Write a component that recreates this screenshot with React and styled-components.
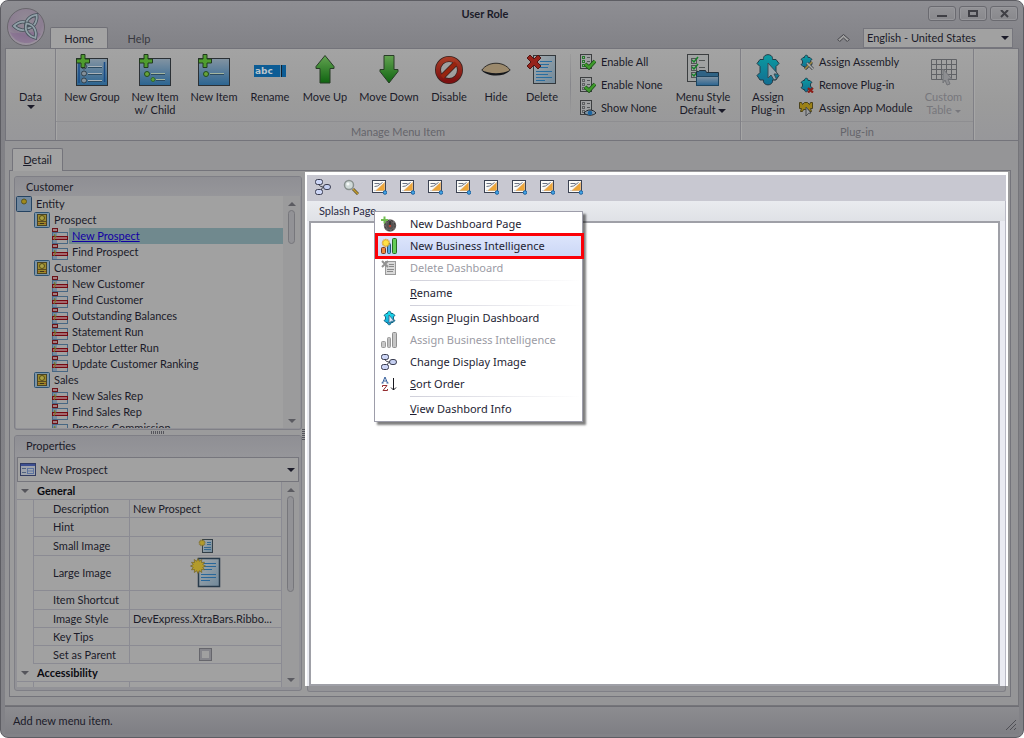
import React from 'react';
import styled, { createGlobalStyle } from 'styled-components';

const ink = '#1b1b29';
const line = '#74747b';

const GlobalStyle = createGlobalStyle`
  *, *::before, *::after { box-sizing: border-box; }
  body { margin: 0; background: #fff; color: ${ink}; font: 11px/16px Lato, "Liberation Sans", sans-serif; }
  button, select, input { font: inherit; color: inherit; }
  button { border: 0; padding: 0; background: none; text-align: left; }
  ul { list-style: none; margin: 0; padding: 0; }
  svg { display: block; flex: none; }
`;

/* ---------- window frame ---------- */
const Window = styled.div`
  display: flex;
  flex-direction: column;
  height: 100vh;
  min-height: 560px;
  padding: 0 4px 3px;
  border: 1px solid #5d5d63;
  border-radius: 8px;
  background: linear-gradient(#8e8e93, #818186 50px, #828287);
  overflow: hidden;
`;
const Header = styled.header`
  display: flex;
  height: 47px;
  flex: none;
`;
const LogoButton = styled.button`
  width: 45px;
  padding: 4px 0 0;
`;
const HeaderMain = styled.div`
  flex: 1;
  min-width: 0;
`;
const TitleRow = styled.div`
  display: flex;
  height: 26px;
`;
const Title = styled.h1`
  flex: 1;
  margin: 0;
  padding-right: 8px;
  font-size: 11px;
  line-height: 26px;
  font-weight: 700;
  text-align: center;
`;
const WindowButtons = styled.div`
  display: flex;
  gap: 3px;
  padding: 5px 1px 0 0;
`;
const WindowButton = styled.button`
  display: flex;
  align-items: center;
  justify-content: center;
  width: 28px;
  height: 15px;
  border: 1px solid #6a6a70;
  border-radius: 3px;
  background: linear-gradient(#939397, #88888c);
  box-shadow: inset 0 0 0 1px #97979b;
`;
const TabRow = styled.nav`
  display: flex;
  align-items: flex-start;
  height: 21px;
`;
const RibbonTab = styled.button`
  height: 22px;
  width: ${(p) => (p.$active ? 58 : 62)}px;
  text-align: center;
  color: ${(p) => (p.$active ? ink : '#38383f')};
  border: 1px solid ${(p) => (p.$active ? '#707077' : 'transparent')};
  border-bottom: 0;
  border-radius: 2px 2px 0 0;
  background: ${(p) => (p.$active ? '#a3a3a3' : 'none')};
`;
const CollapseButton = styled.button`
  margin: 7px 13px 0 auto;
`;
const LanguageBox = styled.label`
  position: relative;
  width: 150px;
  height: 20px;
  margin: 1px 6px 0 0;
`;
const PlainSelect = styled.select`
  appearance: none;
  width: 100%;
  height: 100%;
  padding: 0 20px 0 ${(p) => p.$indent || 3}px;
  border: 1px solid #76767d;
  border-radius: 0;
  background: #a1a1a1;
`;
const Caret = styled.span`
  display: inline-block;
  vertical-align: middle;
  border: ${(p) => p.$size || 4}px solid transparent;
  border-bottom-width: 0;
  border-top-color: ${(p) => p.$color || ink};
`;
const SelectCaret = styled(Caret)`
  position: absolute;
  right: 4px;
  top: 50%;
  margin-top: -2px;
  pointer-events: none;
`;

/* ---------- ribbon ---------- */
const Ribbon = styled.section`
  display: flex;
  flex: none;
  height: 93px;
  border: 1px solid ${line};
  background: linear-gradient(#a3a3a3, #9b9b9b 60%, #97979a);
`;
const RibbonGroup = styled.div`
  display: flex;
  flex-direction: column;
  border-right: 1px solid #808086;
  box-shadow: 1px 0 #a6a6a6;
`;
const GroupTools = styled.div`
  display: flex;
  flex: 1;
  align-items: flex-start;
  padding: 5px 9px 0;
`;
const GroupCaption = styled.div`
  height: 19px;
  line-height: 19px;
  border-top: 1px solid #8e8e91;
  color: #65656b;
  text-align: center;
`;
const BigButton = styled.button`
  display: flex;
  flex-direction: column;
  align-items: center;
  width: ${(p) => p.$width}px;
  color: ${(p) => (p.disabled ? '#77777c' : ink)};
  text-align: center;
  line-height: 13px;
  white-space: nowrap;
  svg { margin-bottom: 4px; }
`;
const DataButton = styled(BigButton)`
  margin-top: 41px;
  gap: 2px;
`;
const ToolStrip = styled.div`
  display: flex;
  gap: 13px;
  margin-right: 8px;
`;
const ToolRule = styled.div`
  width: 1px;
  height: 62px;
  margin: 0 9px 0 3px;
  background: linear-gradient(#9b9b9b, #85858a, #9b9b9b);
`;
const SmallStack = styled.div`
  display: flex;
  flex-direction: column;
  width: ${(p) => p.$width}px;
  margin-top: -4px;
`;
const PluginStack = styled(SmallStack)`
  margin-left: 12px;
`;
const SmallButton = styled.button`
  display: flex;
  align-items: center;
  gap: 5px;
  height: 23px;
  white-space: nowrap;
`;

/* ---------- body ---------- */
const Body = styled.main`
  display: flex;
  flex-direction: column;
  flex: 1;
  min-height: 0;
  padding: 7px 7px 8px 4px;
  border: solid #75757a;
  border-width: 0 1px 1px 0;
  background: #959597;
`;
const DetailTab = styled.button`
  flex: none;
  align-self: flex-start;
  width: 51px;
  height: 23px;
  margin: 0 0 -1px 3px;
  border: 1px solid ${line};
  border-bottom: 0;
  border-radius: 2px 2px 0 0;
  background: #a2a2a2;
  text-align: center;
  z-index: 1;
`;
const Page = styled.div`
  display: flex;
  flex: 1;
  min-height: 0;
  border: 1px solid ${line};
  background: #9b9b9c;
`;
const Sidebar = styled.aside`
  display: flex;
  flex-direction: column;
  flex: none;
  width: 292px;
  padding: 5px 0 5px 4px;
`;
const Panel = styled.section`
  display: flex;
  flex-direction: column;
  min-height: 0;
  border: 1px solid #7f7f86;
  border-radius: 3px;
  background: #929297;
  overflow: hidden;
`;
const TreePanel = styled(Panel)` flex: 0 0 254px; `;
const PropertyPanel = styled(Panel)` flex: 1 1 0; `;
const PanelTitle = styled.h2`
  flex: none;
  margin: 0;
  padding: 0 11px;
  font-size: 11px;
  font-weight: 400;
  line-height: 19px;
  height: ${(p) => p.$height}px;
  background: linear-gradient(#8f8f94, #96969a);
`;
const Grip = styled.div`
  flex: none;
  align-self: center;
  width: ${(p) => (p.$vertical ? 3 : 14)}px;
  height: ${(p) => (p.$vertical ? 14 : 5)}px;
  padding: 1px 0;
  background: ${(p) =>
    p.$vertical
      ? 'repeating-linear-gradient(#55555c 0 1px, transparent 1px 2px)'
      : 'repeating-linear-gradient(90deg, #55555c 0 1px, transparent 1px 2px)'};
  background-clip: content-box;
`;
const ScrollArea = styled.div`
  display: flex;
  flex: 1;
  min-height: 0;
  margin: 0 1px 1px;
  overflow: hidden;
  background: #a1a1a1;
`;
const PropertyArea = styled(ScrollArea)`
  margin: 0 2px 3px;
`;
const Track = styled.div`
  display: flex;
  flex-direction: column;
  align-items: center;
  flex: none;
  width: 17px;
  padding: 6px 0 5px;
  background: #9b9b9c;
`;
const Thumb = styled.div`
  width: 7px;
  height: ${(p) => p.$height}px;
  margin: 4px 0 auto;
  border: 1px solid #77777c;
  border-radius: 4px;
  background: #929296;
`;
const UpCaret = styled(Caret)` transform: rotate(180deg); `;

const Tree = styled.ul`
  flex: 1;
  min-width: 0;
`;
const TreeRow = styled.li`
  display: flex;
  height: 16px;
  padding-left: ${(p) => p.$level * 18}px;
`;
const TreeLink = styled.button`
  flex: 1;
  margin-left: 1px;
  padding-left: 3px;
  line-height: 16px;
  white-space: nowrap;
  background: ${(p) => (p.$selected ? '#70898e' : 'none')};
  color: ${(p) => (p.$selected ? '#1200a4' : ink)};
  text-decoration: ${(p) => (p.$selected ? 'underline' : 'none')};
`;

const ObjectBox = styled.label`
  position: relative;
  flex: none;
  height: 25px;
  margin: 0 2px;
  > svg { position: absolute; left: 3px; top: 5px; }
`;
const PropertyGrid = styled.div`
  flex: 1;
  min-width: 0;
`;
const PropertyTable = styled.table`
  width: 100%;
  border-collapse: separate;
  border-spacing: 0;
  table-layout: fixed;
`;
const Category = styled.th`
  height: 18px;
  padding: 0;
  border-right: 1px solid #8b8b93;
  border-bottom: 1px solid #8b8b93;
  text-align: left;
  color: #0a0a10;
  line-height: 16px;
  button { display: flex; align-items: center; gap: 8px; padding-left: 4px; font-weight: 700; }
`;
const Gutter = styled.td`
  padding: 0;
  border-right: 1px solid #8b8b93;
`;
const PropName = styled.th`
  height: ${(p) => p.$height}px;
  padding: 0 0 0 19px;
  border-right: 1px solid #8b8b93;
  border-bottom: 1px solid #8b8b93;
  font-weight: 400;
  line-height: 16px;
  text-align: left;
  white-space: nowrap;
`;
const PropValue = styled.td`
  padding: 0 3px;
  border-right: 1px solid #8b8b93;
  border-bottom: 1px solid #8b8b93;
  line-height: 16px;
  white-space: nowrap;
  svg { margin: 0 auto; }
`;
const CheckBox = styled.input`
  appearance: none;
  display: block;
  width: 13px;
  height: 13px;
  margin: 0 auto;
  border: 1px solid #66666c;
  box-shadow: inset 0 0 0 2px #85858b;
  background: #a0a0a0;
`;

/* ---------- dashboard ---------- */
const Dashboard = styled.section`
  display: flex;
  flex-direction: column;
  flex: 1;
  min-width: 0;
  margin: 1px 2px 4px 0;
`;
const Lit = styled.div`
  display: flex;
  flex-direction: column;
  flex: 1;
  padding: 3px 2px 0;
  background: #fff;
`;
const DimEdge = styled.div`
  height: 6px;
  margin: 0 2px;
  border: solid #808087;
  border-width: 0 1px 1px;
  border-radius: 0 0 3px 3px;
  background: #949498;
`;
const Toolbar = styled.div`
  display: flex;
  align-items: center;
  gap: 12px;
  height: 26px;
  padding: 0 8px 2px;
  background: #c8c8d1;
`;
const PageTabs = styled.div`
  position: relative;
  height: 20px;
  padding-left: 12px;
  background: linear-gradient(#e9ebef, #dfe1e6);
  border-right: 1px solid #b9b9c4;
  z-index: 2;
`;
const PageTab = styled.button`
  height: 20px;
  line-height: 20px;
  color: #2c2c45;
`;
const CanvasFrame = styled.div`
  display: flex;
  flex: 1;
  padding: 0 5px 0 2px;
  background: #eaebf2;
  border-right: 1px solid #b9b9c4;
`;
const Canvas = styled.div`
  flex: 1;
  border: 2px solid #9fa0a7;
  background: #fff;
`;

/* ---------- context menu ---------- */
const Menu = styled.ul`
  position: absolute;
  left: 67px;
  top: 10px;
  width: 209px;
  padding: 1px 0;
  border: 1px solid #9d9daa;
  background: #fff;
  box-shadow: 3px 3px 2px rgba(0, 0, 0, 0.5);
  font: 11px/22px "Noto Sans", sans-serif;
`;
const MenuRow = styled.li`
  position: relative;
`;
const MenuButton = styled.button`
  display: flex;
  align-items: center;
  gap: 13px;
  width: 100%;
  height: 22px;
  padding-left: 6px;
  color: ${(p) => (p.disabled ? '#9b9ba4' : '#1e1e33')};
  background: ${(p) => (p.$hot ? 'linear-gradient(#dde5fc, #cbd7f6)' : 'none')};
`;
const IconSlot = styled.span`
  width: 16px;
  height: 16px;
`;
const MenuRule = styled.li`
  height: 3px;
  margin-left: 35px;
  padding: 1px 0;
  background: linear-gradient(90deg, #d0d0da, #fff) content-box;
`;
const RedFrame = styled.span`
  position: absolute;
  inset: -2px -2px -2px 0;
  border: 3px solid #fb0007;
  pointer-events: none;
`;

const StatusBar = styled.footer`
  display: flex;
  flex: none;
  align-items: center;
  justify-content: space-between;
  height: 28px;
  padding: 0 2px 0 8px;
  border-top: 1px solid #6e6e74;
  background: linear-gradient(#8c8c90, #7f7f84);
  svg { align-self: flex-end; margin-bottom: 3px; }
`;

/* ---------- icons ---------- */
const Svg = ({ s = 16, children }) => (
  <svg width={s} height={s} viewBox={`0 0 ${s} ${s}`} fill="none" aria-hidden="true">{children}</svg>
);
const DefsSvg = styled.svg`
  position: absolute;
`;
const Defs = () => (
  <DefsSvg width="0" height="0" aria-hidden="true">
    <defs>
      <linearGradient id="blue" x2="0" y2="1"><stop stopColor="#8394a2" /><stop offset="1" stopColor="#2b6491" /></linearGradient>
      <linearGradient id="green" x2="0" y2="1"><stop stopColor="#63a351" /><stop offset="1" stopColor="#0f6410" /></linearGradient>
      <linearGradient id="red" x2="0" y2="1"><stop stopColor="#a63a25" /><stop offset="1" stopColor="#7c1010" /></linearGradient>
      <linearGradient id="teal" x2="0" y2="1"><stop stopColor="#0b9ba1" /><stop offset="1" stopColor="#126d91" /></linearGradient>
      <linearGradient id="cyan" x2="0" y2="1"><stop stopColor="#1ce4ec" /><stop offset="1" stopColor="#109ed8" /></linearGradient>
      <linearGradient id="paper" x2="1" y2="1"><stop stopColor="#a4aaad" /><stop offset="1" stopColor="#71899a" /></linearGradient>
      <radialGradient id="orb" cx=".5" cy=".3" r=".75"><stop stopColor="#918a95" /><stop offset=".6" stopColor="#8b7d91" /><stop offset="1" stopColor="#a29ba5" /></radialGradient>
    </defs>
  </DefsSvg>
);
const Logo = () => (
  <svg width="40" height="40" viewBox="0 0 40 40" fill="none" aria-hidden="true">
    <circle cx="21" cy="20" r="18.5" fill="url(#orb)" stroke="#68666c" />
    <path d="M5 25a17 17 0 0 0 31 2C28 22 11 29 5 25Z" fill="#836690" opacity=".5" />
    {[180, -52, 58].map((a) => (
      <g key={a} transform={`translate(23 19) rotate(${a})`}>
        <path d="M-3 0C2-6 9-5 14 0 9 5 2 6-3 0Z" stroke="#46525b" strokeWidth="3.4" />
        <path d="M-3 0C2-6 9-5 14 0 9 5 2 6-3 0Z" stroke="#91a0a8" strokeWidth="1.8" />
      </g>
    ))}
  </svg>
);
const Plus = () => <path d="M5 .5h4v4.500h4.500v4H9v4.500H5V9H.5V5H5z" fill="#4f9c2e" stroke="#213b1c" />;
const NewGroupIcon = () => (
  <Svg s={32}>
    <rect x=".5" y="4.5" width="31" height="27" fill="url(#blue)" stroke="#2b3035" />
    <path d="M3 9v20M28.500 8v20" stroke="#174b88" strokeWidth="1.5" />
    {[12.5, 19.5, 26.5].map((y) => (
      <g key={y}><path d={`M12 ${y + 1}h14`} stroke="#2b4a60" /><path d={`M12 ${y}h14`} stroke="#a9b2b8" /><circle cx="8" cy={y} r="2.5" fill="#84909a" stroke="#33424d" /></g>
    ))}
    <Plus />
  </Svg>
);
const NewItemIcon = ({ child }) => (
  <Svg s={32}>
    <rect x=".5" y="4.5" width="31" height="27" fill="url(#blue)" stroke="#2b3035" />
    <path d="M12 20.500h14" stroke="#2b4a60" /><path d="M12 19.500h14" stroke="#a3b59f" />
    <circle cx="8" cy="20" r="2.5" fill="#67a338" stroke="#214b1d" />
    {child && <><path d="M17 26.500h9" stroke="#2b4a60" /><path d="M17 25.500h9" stroke="#a3b59f" /><circle cx="14" cy="25.5" r="2" fill="#5f9e38" stroke="#2f6d2b" /></>}
    <Plus />
  </Svg>
);
const RenameIcon = () => (
  <Svg s={32}>
    <rect y="11" width="32" height="12" fill="#0c5c95" />
    <text x="1" y="20" fontFamily="DejaVu Sans, sans-serif" fontWeight="700" fontSize="9" fill="#b9c4cb">abc</text>
    <path d="M27.500 11v12" stroke="#14202c" /><path d="M26.500 11v12" stroke="#5c8eae" />
  </Svg>
);
const UpIcon = () => <Svg s={32}><path d="M16 1.500 25 12.500v2h-4v14.500H11V14.500H7v-2z" fill="url(#green)" stroke="#283c27" /></Svg>;
const DownIcon = () => <Svg s={32}><path d="M11 1.500h10v14h4v2L16 29 7 17.500v-2h4z" fill="url(#green)" stroke="#283c27" /></Svg>;
const DisableIcon = () => (
  <Svg s={32}>
    <circle cx="16" cy="16" r="11" stroke="#3a2320" strokeWidth="6" />
    <path d="m9 23 14-14" stroke="#3a2320" strokeWidth="5.6" />
    <circle cx="16" cy="16" r="11" stroke="url(#red)" strokeWidth="4.4" />
    <path d="m9 23 14-14" stroke="#97240f" strokeWidth="4" />
  </Svg>
);
const HideIcon = () => (
  <Svg s={32}>
    <path d="M2 16C8 7 24 7 30 16c-8 6-20 6-28 0Z" fill="#9b896c" />
    <path d="M2 16C8 7 24 7 30 16" stroke="#2f2c28" />
    <path d="M1 15.500c8 5 22 5 30 0-6 8-24 8-30 0Z" fill="#15171b" />
  </Svg>
);
const DeleteIcon = () => (
  <Svg s={32}>
    <rect x="7.5" y="1.5" width="22" height="28" fill="url(#paper)" stroke="#33383c" />
    <path d="M14 7.500h12M14 10.500h9M14 13.500h8M10 17.500h16M10 20.500h12M10 23.500h16M10 26.500h9" stroke="#286da0" />
    <path d="m1 4 3-3 4 4 4-4 3 3-4 4 4 4-3 3-4-4-4 4-3-3 4-4z" fill="#96231b" stroke="#511512" />
  </Svg>
);
const ListIcon = ({ mark }) => (
  <Svg>
    <rect x=".5" y=".5" width="11" height="14" fill="#9fa1a2" stroke="#3c3e40" />
    {[3, 7, 11].map((y) => (
      <g key={y}><rect x="2.5" y={y - 0.5} width="2" height="2" stroke={mark === 'all' ? '#267b2b' : '#606264'} /><path d={`M7 ${y + 0.5}h3`} stroke="#55585a" /></g>
    ))}
    {mark === 'eye' ? (
      <><path d="M4 13c3-4 9-4 12 0-3 3-9 3-12 0Z" fill="#8094a3" stroke="#20242a" /><circle cx="10" cy="13" r="2.3" fill="#1d65a0" /></>
    ) : (
      <><path d="m5 10 4 3.500 6-6.500" stroke="#1c4d1b" strokeWidth="4" /><path d="m5 10 4 3.500 6-6.500" stroke="#3f9a2b" strokeWidth="2.500" /></>
    )}
  </Svg>
);
const MenuStyleIcon = () => (
  <Svg s={32}>
    <rect x=".5" y=".5" width="21" height="27" fill="#a0a2a2" stroke="#3b3e40" />
    {[6, 13, 20].map((y) => (
      <g key={y}><rect x="4.5" y={y - 1.5} width="5" height="5" stroke="#515555" /><path d={`m5 ${y} 2 2 4-5`} stroke="#158128" strokeWidth="1.5" /><path d={`M12 ${y + 0.5}h6`} stroke="#515555" /></g>
    ))}
    <path d="M9.500 31.500v-14h2l1-1h6l1 2h12v13z" fill="#2f6385" stroke="#20303c" />
    <path d="M9.500 31.500v-9h22v9z" fill="url(#blue)" stroke="#1e4560" />
  </Svg>
);
const puzzle = 'M5 3.500h1.500c-.5-3 4-3 3.500 0h2l2 2-1.500 1v3l1.500 1-2 2h-2c.5 3-4 3-3.500 0H5l-2-2 1.500-1v-3L3 5.500z';
const Puzzle = ({ bright, mark }) => (
  <Svg>
    <path d={puzzle} fill={`url(#${bright ? 'cyan' : 'teal'})`} stroke={bright ? '#176785' : '#203f4c'} />
    {mark === 'tools' && <><path d="m7 15 7-7m1 7L9 9" stroke="#45474a" strokeWidth="3" /><path d="m7 15 7-7" stroke="#a08b40" strokeWidth="1.5" /><path d="m15 15-6-6" stroke="#a5a9ab" strokeWidth="1.5" /></>}
    {mark === 'x' && <path d="m10 11 5 4.500m0-4.500-5 4.500" stroke="#8c1d18" strokeWidth="2.2" />}
    {mark === 'arrow' && <path d="m8 5 5 6-2.500.3L8 13z" fill="#dcecff" stroke="#42617a" strokeWidth=".8" />}
  </Svg>
);
const PuzzleLargeIcon = () => (
  <Svg s={32}>
    <path d="M8 5.500h3.500C10.500-1 21.500-1 20.500 5.500H24l3 4-3 3v6l3 3-3 4.500h-3.500c1 6.500-10 6.500-9 0H8L5 21.500l3-3v-6l-3-3z" fill="url(#teal)" stroke="#243c48" />
    <path d="m16 9 10 11h-4l2.500 5-2.500 1-3-5-3 3z" fill="#98a5ac" stroke="#3b4a53" />
  </Svg>
);
const AppModuleIcon = () => (
  <Svg>
    <path d="M1.500 2.500h2l1 2 2-2h3l2 2 1-2h2v6h-2l1 3h-2l-1-2h-5l-1 2h-2l1-3h-2z" fill="#9c8117" stroke="#4b421b" />
    <path d="m8 7 5 6-2.500.3L8 16z" fill="#9da0a3" stroke="#47494d" />
  </Svg>
);
const TableIcon = () => (
  <Svg s={32}>
    <path d="M3.500 5.500h25v20h-25zM8.500 5v21M13.500 5v21M18.500 5v21M23.500 5v21M3 10.500h25M3 15.500h25M3 20.500h25" stroke="#606266" />
    <path d="m15 15 9 10h-4l2 5-3 1-2-5-2 3z" fill="#8d8e91" stroke="#737478" />
  </Svg>
);
const EntityIcon = () => (
  <Svg><rect x=".5" y=".5" width="15" height="15" rx="1" fill="#71889e" stroke="#254361" /><circle cx="8" cy="5.5" r="2.5" fill="#a08919" stroke="#5a5521" /></Svg>
);
const FolderIcon = () => (
  <Svg><rect x=".5" y=".5" width="15" height="15" rx="1" fill="#7b93a5" stroke="#2c5273" /><rect x="3.5" y="2.5" width="9" height="11" fill="#9d8b2c" stroke="#4b4422" /><path d="M4 9.500h8" stroke="#5a4a20" /><circle cx="8" cy="6" r="2.5" fill="#aaa044" stroke="#554c1c" /><path d="M4 11.500h8" stroke="#9d5b20" /><path d="M6 11.500h4" stroke="#3d3418" /></Svg>
);
const FormIcon = () => (
  <Svg><rect x=".5" y="4.5" width="15" height="11" fill="#a1a1a1" stroke="#486783" /><rect x="1" y="5" width="4" height="10" fill="#778ba1" /><rect x=".5" y=".5" width="5" height="3" fill="#a57e80" stroke="#6b1218" /><rect x="0" y="8" width="16" height="4" fill="#760811" /><rect x="1" y="9" width="14" height="2" fill="#a2696e" /><path d="m3 6-1 2h2l-2 4" stroke="#737b25" /></Svg>
);
const PropFormIcon = () => (
  <Svg><rect x=".5" y="1.5" width="15" height="12" fill="#9ea3ac" stroke="#313b62" /><path d="M1 3h14" stroke="#3d4f91" strokeWidth="2" /><path d="M2 6.500h4m-4 4h4" stroke="#51627f" /><rect x="7.5" y="6.5" width="6" height="5" fill="#a1a6ae" stroke="#5c73a0" /><path d="M8 9h5" stroke="#5c73a0" /></Svg>
);
const sunPoints = Array.from({ length: 24 }, (_, i) => {
  const r = i % 2 ? 5 : 7.5;
  const a = (i * Math.PI) / 12;
  return `${(8 + r * Math.cos(a)).toFixed(1)},${(9 + r * Math.sin(a)).toFixed(1)}`;
}).join(' ');
const NewDocIcon = () => (
  <Svg s={32}><rect x="8.5" y="1.5" width="21" height="28" fill="url(#paper)" stroke="#283b4b" strokeWidth="1.5" /><path d="M14 6.500h12M14 9.500h12M14 12.500h8M11 17.500h15M11 20.500h15M11 23.500h9" stroke="#28679a" /><polygon points={sunPoints} fill="#b39b2b" stroke="#716224" strokeWidth=".7" /></Svg>
);
const NewDocSmallIcon = () => (
  <Svg><rect x="4.5" y="1.5" width="10" height="13" fill="url(#paper)" stroke="#343f47" /><path d="M9 4.500h4M9 6.500h4M6 9.500h7M6 11.500h7" stroke="#34678d" /><polygon points={sunPoints} transform="translate(.5 .8) scale(.45)" fill="#b39b2b" stroke="#716224" /></Svg>
);
const FlowIcon = () => (
  <Svg>
    <path d="M4 4c0 3 1 4 7 4M6 12c1-3 1-4 5-4" stroke="#33353f" />
    <rect x=".5" y=".5" width="7" height="5" rx="2" fill="#cdd6f6" stroke="#3a3d50" />
    <rect x="8.500" y="5.500" width="7" height="5" rx="2.5" fill="#c5cff1" stroke="#3a3d50" />
    <rect x=".5" y="10.500" width="7" height="5" rx="2" fill="#cdd6f6" stroke="#3a3d50" />
  </Svg>
);
const SearchIcon = () => (
  <Svg><path d="m10 10 5 5" stroke="#59522f" strokeWidth="3" /><path d="m10 10 5 5" stroke="#c69c2d" strokeWidth="1.5" /><circle cx="6" cy="6" r="4.5" fill="#d0dad8" stroke="#89918f" strokeWidth="1.5" /><circle cx="5" cy="5" r="1.5" fill="#f6faf8" /></Svg>
);
const ChartIcon = () => (
  <Svg><rect x="1.5" y="1.5" width="13" height="12" fill="#fbfbf8" stroke="#3b4252" /><path d="M3 11.500h9" stroke="#c9cfd6" /><path d="M5 11.500 13.500 3.500v8z" fill="#eda63a" stroke="#e0a860" strokeWidth=".6" /><path d="M3.500 4.500h5M3.500 7.500l3-.5 5-3.500" stroke="#6c7484" /><circle cx="14" cy="13.500" r="1.8" fill="#43a6e7" stroke="#1f62a0" /></Svg>
);
const DialIcon = () => (
  <Svg><circle cx="9" cy="9.500" r="5" fill="#555252" stroke="#6c6868" strokeWidth="2.500" /><circle cx="9" cy="9.500" r="5" stroke="#3a3737" strokeDasharray="2 2" /><path d="M9 5v4.500" stroke="#191717" /><circle cx="9" cy="10" r="1.3" fill="#b74334" /><path d="M3.500.5v7M0 4h7" stroke="#71bd51" strokeWidth="2" /></Svg>
);
const BarsIcon = ({ gray }) => (
  <Svg>
    <rect x=".5" y="9.5" width="4" height="6" rx="1" fill={gray ? '#c9c9c9' : '#ee873f'} stroke={gray ? '#999' : '#753b21'} />
    <rect x="6.5" y="5.5" width="3" height="10" rx="1" fill={gray ? '#c0c0c0' : '#55a7e4'} stroke={gray ? '#999' : '#235775'} />
    <rect x="11.5" y=".5" width="4" height="15" rx="1" fill={gray ? '#c6c6c6' : '#63cc58'} stroke={gray ? '#8f8f8f' : '#286b25'} />
    {!gray && <polygon points={sunPoints} transform="translate(.5 0) scale(.55)" fill="#ffe145" stroke="#d59312" />}
  </Svg>
);
const DeletePageIcon = () => (
  <Svg><rect x="4.5" y="1.5" width="10" height="13" fill="#d9d9d9" stroke="#999" /><path d="M8 4.500h5M8 6.500h5M6 9.500h7M6 11.500h6" stroke="#8a8a8a" /><path d="m1 1 6 6m0-6L1 7" stroke="#929292" strokeWidth="2" /></Svg>
);
const SortIcon = () => (
  <Svg><path d="m1.500 7 2.500-6 2.500 6M2.500 5h3M.5 7h2M5.500 7h2" stroke="#355f9c" /><path d="M1.500 11V9.500H6l-4 5h4.500V13" stroke="#942d30" /><path d="M12.500 2v12m-2.500-2.500 2.500 2.500 2.500-2.500" stroke="#17171e" /></Svg>
);
const CollapseIcon = () => (
  <svg width="13" height="8" viewBox="0 0 13 8" fill="none" aria-hidden="true"><path d="m.7 5.500 5.800-5 5.800 5-2 2-3.800-3.500-3.800 3.500z" fill="#a0a0a0" stroke="#45454b" /></svg>
);

/* ---------- data ---------- */
const bigTools = [
  ['New Group', NewGroupIcon, 54],
  ['New Item\nw/ Child', () => <NewItemIcon child />, 46],
  ['New Item', NewItemIcon, 46],
  ['Rename', RenameIcon, 40],
  ['Move Up', UpIcon, 44],
  ['Move Down', DownIcon, 58],
  ['Disable', DisableIcon, 36],
  ['Hide', HideIcon, 32],
  ['Delete', DeleteIcon, 34],
];
const lines = (text) => text.split('\n').map((t) => <span key={t}>{t}</span>);

const tree = [
  [0, 'Entity'], [1, 'Prospect'], [2, 'New Prospect'], [2, 'Find Prospect'],
  [1, 'Customer'], [2, 'New Customer'], [2, 'Find Customer'], [2, 'Outstanding Balances'],
  [2, 'Statement Run'], [2, 'Debtor Letter Run'], [2, 'Update Customer Ranking'],
  [1, 'Sales'], [2, 'New Sales Rep'], [2, 'Find Sales Rep'], [2, 'Process Commission'],
];
const treeIcons = [EntityIcon, FolderIcon, FormIcon];
const properties = [
  ['Description', 18, 'New Prospect'],
  ['Hint', 19, ''],
  ['Small Image', 19, <NewDocSmallIcon />],
  ['Large Image', 35, <NewDocIcon />],
  ['Item Shortcut', 19, ''],
  ['Image Style', 18, 'DevExpress.XtraBars.Ribbo...'],
  ['Key Tips', 18, ''],
  ['Set as Parent', 18, <CheckBox type="checkbox" aria-label="Set as Parent" />],
];
const menu = [
  { text: 'New Dashboard Page', icon: <DialIcon /> },
  { text: 'New Business Intelligence', icon: <BarsIcon />, hot: true },
  { text: 'Delete Dashboard', icon: <DeletePageIcon />, off: true },
  null,
  { text: 'Rename', key: 'R' },
  null,
  { text: 'Assign Plugin Dashboard', key: 'P', icon: <Puzzle bright mark="arrow" /> },
  { text: 'Assign Business Intelligence', icon: <BarsIcon gray />, off: true },
  { text: 'Change Display Image', icon: <FlowIcon /> },
  { text: 'Sort Order', key: 'S', icon: <SortIcon /> },
  null,
  { text: 'View Dashbord Info', key: 'V' },
];
const Mnemonic = ({ text, k }) => {
  const i = k ? text.indexOf(k) : -1;
  return i < 0 ? <span>{text}</span> : <span>{text.slice(0, i)}<u>{k}</u>{text.slice(i + 1)}</span>;
};

const ScrollTrack = ({ thumb }) => (
  <Track><UpCaret $color="#5b5b61" /><Thumb $height={thumb} /><Caret $color="#5b5b61" /></Track>
);

export default function App() {
  return (
    <>
      <GlobalStyle />
      <Window>
        <Defs />
        <Header>
          <LogoButton aria-label="Application menu"><Logo /></LogoButton>
          <HeaderMain>
            <TitleRow>
              <Title>User Role</Title>
              <WindowButtons>
                <WindowButton aria-label="Minimize"><svg width="10" height="9"><rect y="6" width="10" height="2" fill="#3f3f45" /></svg></WindowButton>
                <WindowButton aria-label="Maximize"><svg width="10" height="8"><rect x="1" y="1" width="8" height="5" fill="none" stroke="#3f3f45" strokeWidth="2" /></svg></WindowButton>
                <WindowButton aria-label="Close"><svg width="9" height="8"><path d="m1 0 7 7m0-7L1 7" stroke="#3f3f45" strokeWidth="2" /></svg></WindowButton>
              </WindowButtons>
            </TitleRow>
            <TabRow>
              <RibbonTab $active>Home</RibbonTab>
              <RibbonTab>Help</RibbonTab>
              <CollapseButton aria-label="Collapse ribbon"><CollapseIcon /></CollapseButton>
              <LanguageBox>
                <PlainSelect aria-label="Language"><option>English - United States</option></PlainSelect>
                <SelectCaret />
              </LanguageBox>
            </TabRow>
          </HeaderMain>
        </Header>

        <Ribbon>
          <RibbonGroup>
            <DataButton $width={49}>Data<Caret /></DataButton>
          </RibbonGroup>
          <RibbonGroup>
            <GroupTools>
              <ToolStrip>
                {bigTools.map(([text, Icon, width]) => (
                  <BigButton key={text} $width={width}><Icon />{lines(text)}</BigButton>
                ))}
              </ToolStrip>
              <ToolRule />
              <SmallStack $width={95}>
                <SmallButton><ListIcon mark="all" />Enable All</SmallButton>
                <SmallButton><ListIcon mark="none" />Enable None</SmallButton>
                <SmallButton><ListIcon mark="eye" />Show None</SmallButton>
              </SmallStack>
              <BigButton $width={56}><MenuStyleIcon /><span>Menu Style</span><span>Default <Caret /></span></BigButton>
            </GroupTools>
            <GroupCaption>Manage Menu Item</GroupCaption>
          </RibbonGroup>
          <RibbonGroup>
            <GroupTools>
              <BigButton $width={36}><PuzzleLargeIcon />{lines('Assign\nPlug-in')}</BigButton>
              <PluginStack $width={125}>
                <SmallButton><Puzzle mark="tools" />Assign Assembly</SmallButton>
                <SmallButton><Puzzle mark="x" />Remove Plug-in</SmallButton>
                <SmallButton><AppModuleIcon />Assign App Module</SmallButton>
              </PluginStack>
              <BigButton $width={41} disabled><TableIcon /><span>Custom</span><span>Table <Caret $color="#77777c" $size={3} /></span></BigButton>
            </GroupTools>
            <GroupCaption>Plug-in</GroupCaption>
          </RibbonGroup>
        </Ribbon>

        <Body>
          <DetailTab><u>D</u>etail</DetailTab>
          <Page>
            <Sidebar>
              <TreePanel>
                <PanelTitle $height={19}>Customer</PanelTitle>
                <ScrollArea>
                  <Tree>
                    {tree.map(([level, text]) => {
                      const Icon = treeIcons[level];
                      return (
                        <TreeRow key={level + text} $level={level}>
                          <Icon />
                          <TreeLink $selected={text === 'New Prospect'}>{text}</TreeLink>
                        </TreeRow>
                      );
                    })}
                  </Tree>
                  <ScrollTrack thumb={34} />
                </ScrollArea>
              </TreePanel>
              <Grip />
              <PropertyPanel>
                <PanelTitle $height={21}>Properties</PanelTitle>
                <ObjectBox>
                  <PlainSelect aria-label="Object" $indent={22}><option>New Prospect</option></PlainSelect>
                  <PropFormIcon />
                  <SelectCaret />
                </ObjectBox>
                <PropertyArea>
                  <PropertyGrid>
                    <PropertyTable>
                      <colgroup><col width="17" /><col width="96" /><col /></colgroup>
                      <tbody>
                        <tr><Category colSpan={3}><button><Caret $color="#55555b" />General</button></Category></tr>
                        {properties.map(([name, height, value]) => (
                          <tr key={name}>
                            <Gutter />
                            <PropName scope="row" $height={height}>{name}</PropName>
                            <PropValue>{value}</PropValue>
                          </tr>
                        ))}
                        <tr><Category colSpan={3}><button><Caret $color="#55555b" />Accessibility</button></Category></tr>
                        <tr><Gutter /><PropName $height={18} /><PropValue /></tr>
                      </tbody>
                    </PropertyTable>
                  </PropertyGrid>
                  <ScrollTrack thumb={96} />
                </PropertyArea>
              </PropertyPanel>
            </Sidebar>
            <Grip $vertical />
            <Dashboard>
              <Lit>
                <Toolbar>
                  <button aria-label="Diagram"><FlowIcon /></button>
                  <button aria-label="Find"><SearchIcon /></button>
                  {[1, 2, 3, 4, 5, 6, 7, 8].map((n) => <button key={n} aria-label={`Dashboard ${n}`}><ChartIcon /></button>)}
                </Toolbar>
                <PageTabs>
                  <PageTab>Splash Page</PageTab>
                  <Menu>
                    {menu.map((m, i) =>
                      m ? (
                        <MenuRow key={m.text}>
                          <MenuButton disabled={m.off} $hot={m.hot}>
                            {m.icon || <IconSlot />}
                            <Mnemonic text={m.text} k={m.key} />
                          </MenuButton>
                          {m.hot && <RedFrame />}
                        </MenuRow>
                      ) : (
                        <MenuRule key={i} />
                      )
                    )}
                  </Menu>
                </PageTabs>
                <CanvasFrame><Canvas /></CanvasFrame>
              </Lit>
              <DimEdge />
            </Dashboard>
          </Page>
        </Body>

        <StatusBar>
          <span>Add new menu item.</span>
          <svg width="12" height="12" aria-hidden="true"><path d="M1 11 11 1M5 11l6-6M9 11l2-2" stroke="#4f4f55" /></svg>
        </StatusBar>
      </Window>
    </>
  );
}
